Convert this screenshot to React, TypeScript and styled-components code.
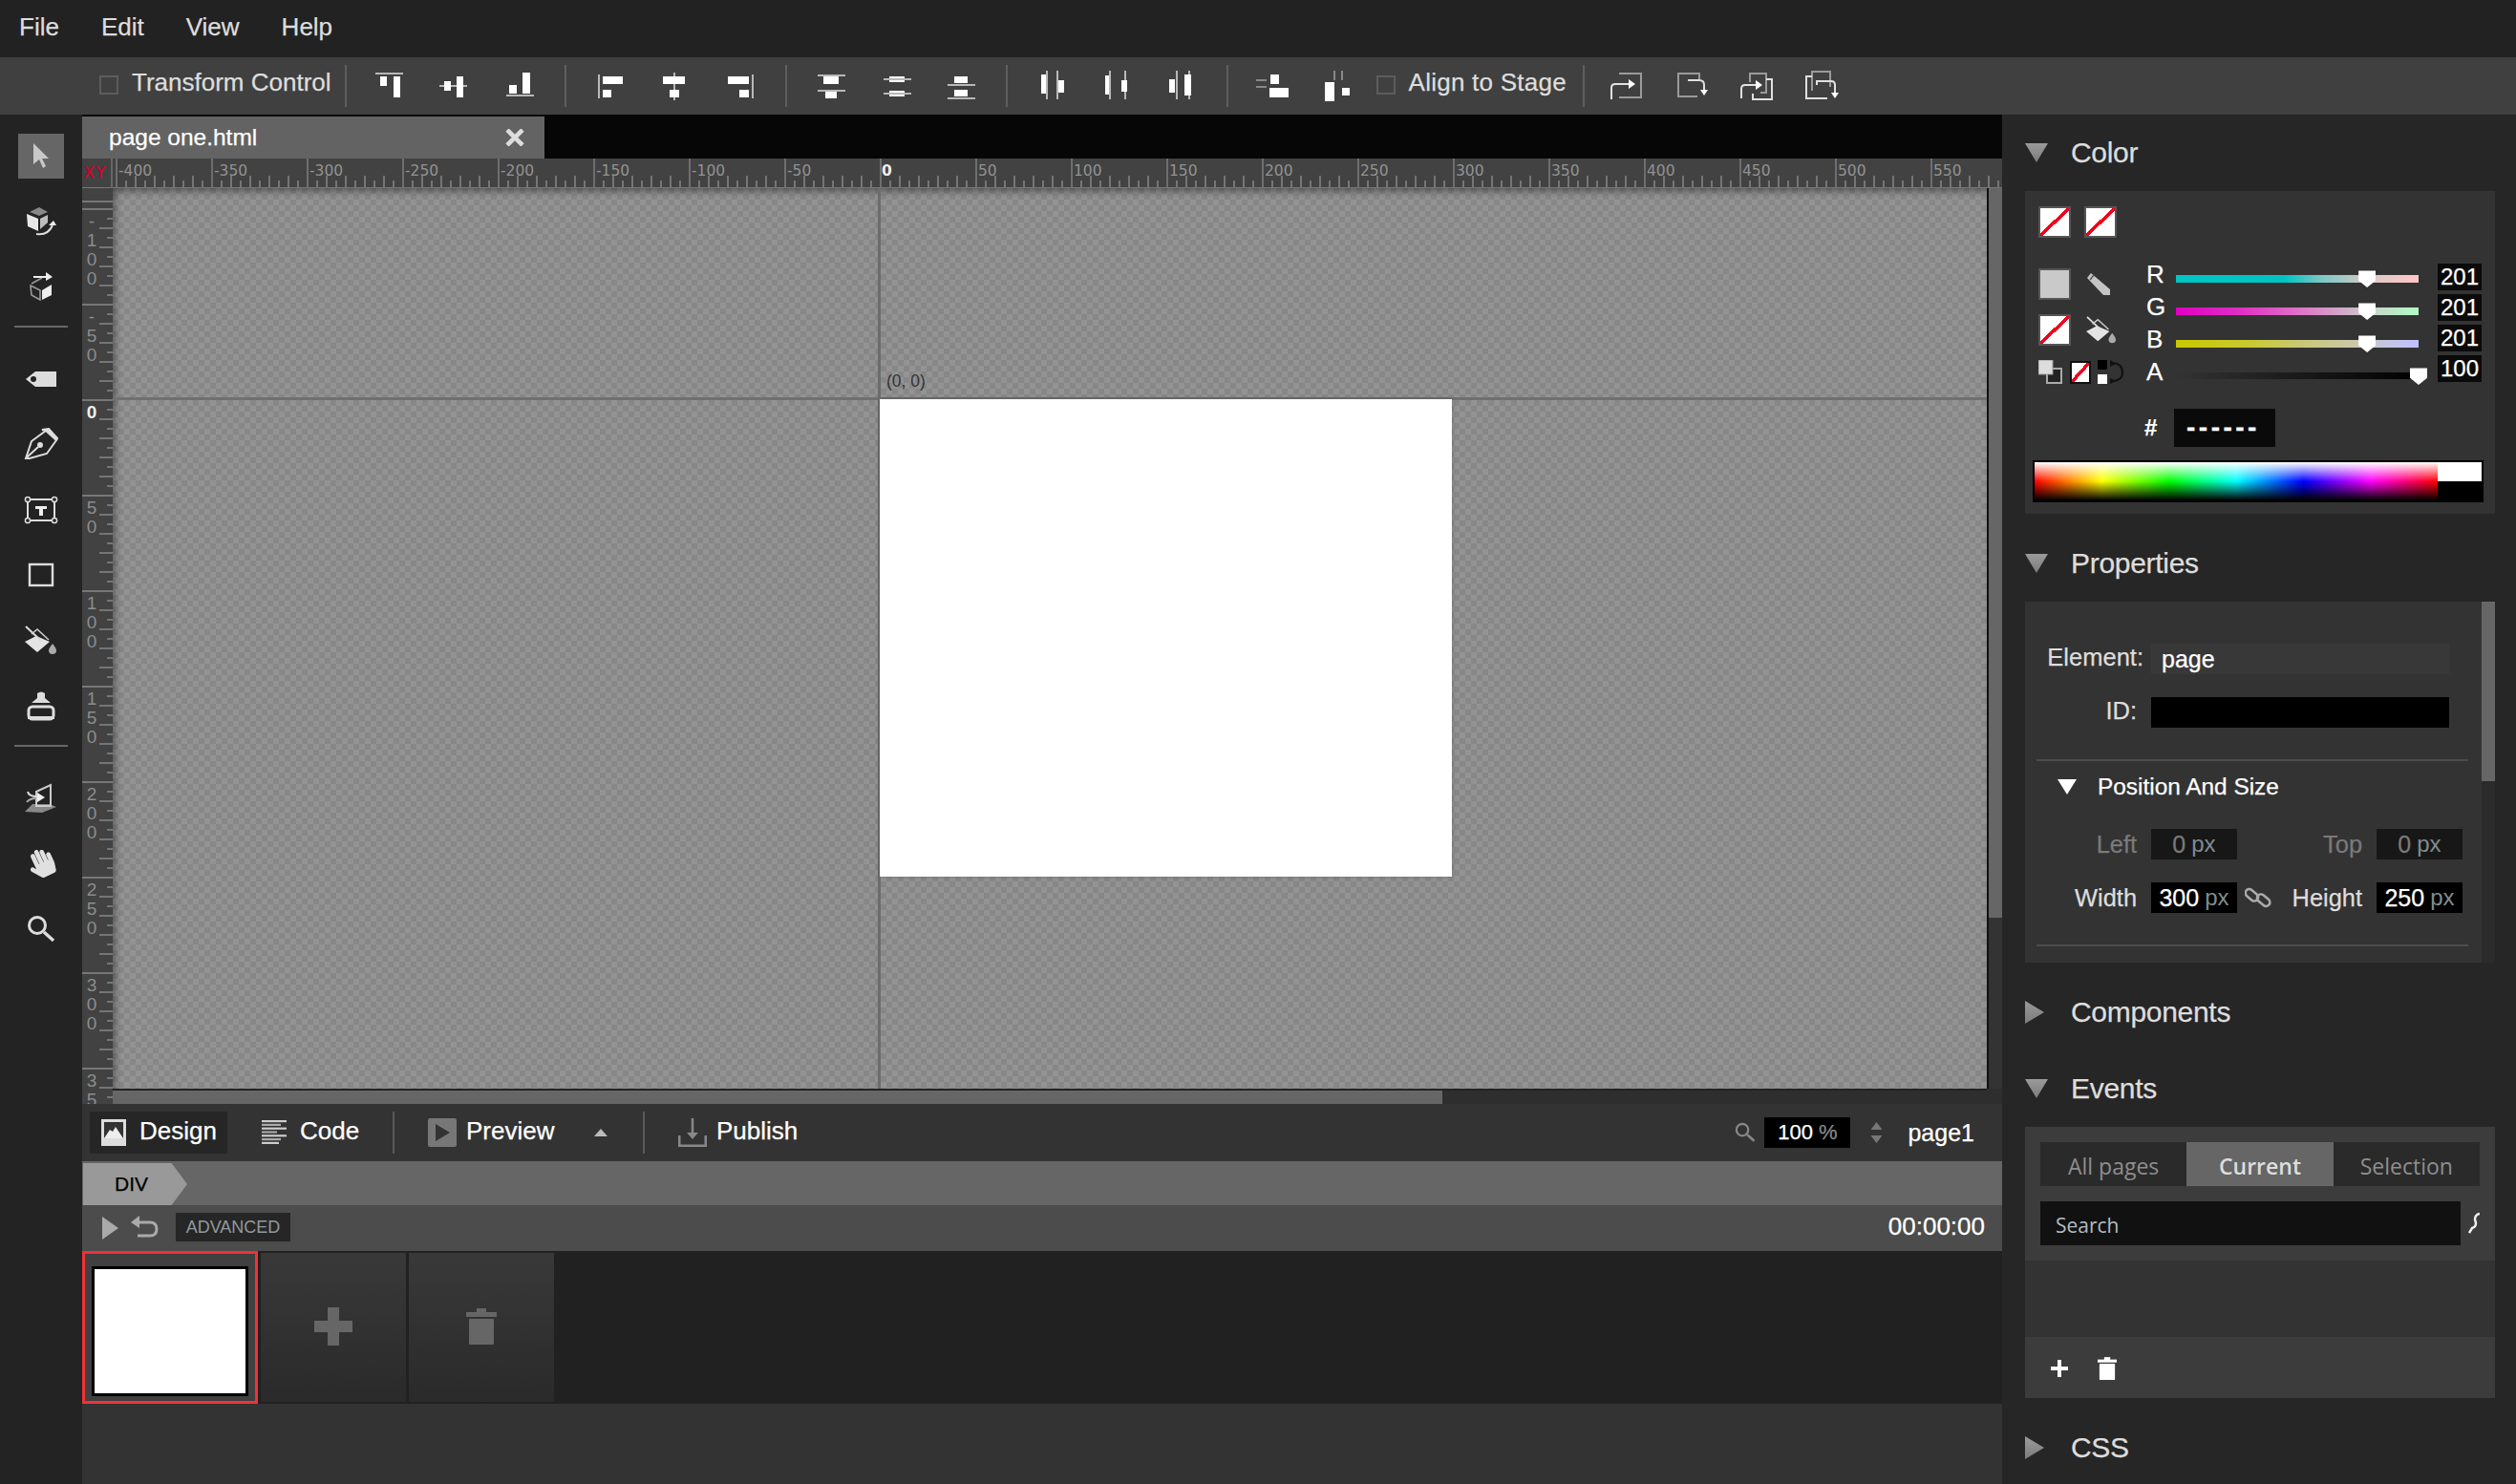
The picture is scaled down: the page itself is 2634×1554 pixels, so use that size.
import React from 'react';
import styled, { createGlobalStyle } from 'styled-components';
import { FaHandPaper } from 'react-icons/fa';

const GlobalStyle = createGlobalStyle`
  html, body {
    margin: 0;
    background: #262626;
    overflow: hidden;
  }
  * { box-sizing: border-box; }
`;

const MENU = ['File', 'Edit', 'View', 'Help'];

// rects for the align buttons: x, y, w, h, colour (white when left out)
type R = [number, number, number, number, string?];
const G = '#b8b8b8';
const ALIGN: R[][][] = [
  [
    [[4, 3, 29, 2, G], [9, 7, 7, 10], [23, 7, 7, 22]],
    [[3, 16, 29, 2, G], [8, 12, 7, 10], [21, 7, 7, 22]],
    [[5, 26, 29, 2, G], [8, 16, 8, 9], [22, 3, 8, 22]],
  ],
  [
    [[6, 5, 2, 25, G], [11, 7, 21, 8], [11, 21, 9, 8]],
    [[17, 3, 2, 29, G], [6, 7, 23, 8], [13, 21, 10, 8]],
    [[31, 5, 2, 25, G], [6, 7, 22, 8], [18, 21, 10, 8]],
  ],
  [
    [[5, 5, 29, 2, G], [11, 7, 16, 8], [5, 21, 29, 2, G], [13, 23, 12, 7]],
    [[12, 7, 16, 6], [6, 9, 29, 2, G], [12, 22, 16, 6], [6, 24, 29, 2, G]],
    [[12, 7, 14, 7], [5, 15, 29, 2, G], [12, 21, 14, 7], [5, 29, 29, 2, G]],
  ],
  [
    [[8, 5, 5, 20], [13, 1, 2, 30, G], [24, 1, 2, 30, G], [26, 11, 6, 13]],
    [[7, 6, 5, 20], [11, 1, 2, 30, G], [27, 1, 2, 30, G], [24, 11, 6, 12]],
    [[6, 10, 6, 14], [13, 1, 2, 30, G], [26, 1, 2, 30, G], [22, 5, 7, 22]],
  ],
  [
    [[2, 10, 11, 2, '#888'], [2, 17, 11, 2, '#888'], [17, 5, 9, 10], [16, 19, 20, 10]],
    [[6, 13, 10, 20], [15, 1, 2, 10, '#888'], [23, 1, 2, 10, '#888'], [24, 19, 8, 8]],
  ],
];

const TOP_VALUES = [-400, -350, -300, -250, -200, -150, -100, -50, 0, 50, 100, 150, 200, 250, 300, 350, 400, 450, 500, 550];
// the last one runs off the bottom of the ruler
const SIDE_VALUES = ['-100', '-50', '0', '50', '100', '150', '200', '250', '300', '35'];

const SLIDERS = [
  { name: 'R', at: 78.8, fill: 'linear-gradient(90deg,#00c6c6 0,#00c4c4 45%,#7cc8c4 60%,#c6c9c8 76%,#e6c8c8 84%,#ffc6c6 100%)' },
  { name: 'G', at: 78.8, fill: 'linear-gradient(90deg,#e000c4 0,#e02cc4 25%,#e070c8 50%,#c9c0c8 76%,#c4dcc8 84%,#b0fcc4 100%)' },
  { name: 'B', at: 78.8, fill: 'linear-gradient(90deg,#c9c800 0,#c9c830 30%,#c9c880 55%,#c9c9b0 76%,#c6c6dc 84%,#c0c0ff 100%)' },
  { name: 'A', at: 100, fill: 'linear-gradient(90deg,rgba(0,0,0,0) 0,#000 100%)' },
];
const VALUES = ['201', '201', '201', '100'];

const Glyph = ({ rects }: { rects: R[] }) => (
  <svg width="36" height="34" viewBox="0 0 36 34">
    {rects.map((r, i) => (
      <rect key={i} x={r[0]} y={r[1]} width={r[2]} height={r[3]} fill={r[4] || '#fff'} />
    ))}
  </svg>
);

const ArrangeFront = () => (
  <svg width="36" height="34" viewBox="0 0 36 34" fill="none">
    <path d="M10 4H33V29H10" stroke="#9a9a9a" strokeWidth="2" />
    <path d="M2 31V19Q2 15 6 15H21" stroke="#e0e0e0" strokeWidth="2" />
    <path d="M20 10L27 15L20 20Z" fill="#fff" />
  </svg>
);
const ArrangeBack = () => (
  <svg width="36" height="34" viewBox="0 0 36 34" fill="none">
    <path d="M26 10V4H4V28H24" stroke="#9a9a9a" strokeWidth="2" />
    <path d="M14 11H26Q31 11 31 16V22" stroke="#e0e0e0" strokeWidth="2" />
    <path d="M27 21H35L31 27Z" fill="#fff" />
  </svg>
);
const ArrangeForward = () => (
  <svg width="36" height="34" viewBox="0 0 36 34" fill="none">
    <path d="M11 13V4H28V24H22" stroke="#9a9a9a" strokeWidth="2" />
    <path d="M28 10H34V31H14V25" stroke="#e0e0e0" strokeWidth="2" />
    <path d="M2 30V20Q2 16 6 16H18" stroke="#e0e0e0" strokeWidth="2" />
    <path d="M17 11L24 16L17 21Z" fill="#fff" />
  </svg>
);
const ArrangeBackward = () => (
  <svg width="38" height="34" viewBox="0 0 38 34" fill="none">
    <path d="M8 22V2H27V18" stroke="#9a9a9a" strokeWidth="2" />
    <path d="M8 7H2V30H24" stroke="#e0e0e0" strokeWidth="2" />
    <path d="M13 16V12H28Q32 12 32 16V25" stroke="#e0e0e0" strokeWidth="2" />
    <path d="M28 24H36L32 30Z" fill="#fff" />
  </svg>
);

const ToolArrow = () => (
  <svg width="20" height="28" viewBox="0 0 20 28">
    <path d="M2 1V23L8 18L12 27L15 25L11 17H18Z" fill="#c8c8c8" />
  </svg>
);
const ToolRotate = () => (
  <svg width="34" height="32" viewBox="0 0 34 32">
    <path d="M5 6L15 1L24 6L15 10Z" fill="#888" />
    <path d="M2 8L14 13V26L3 21Z" fill="#e8e8e8" />
    <path d="M16 13L24 9V17L16 24Z" fill="#bdbdbd" />
    <path d="M12 29Q24 31 29 20" stroke="#ddd" strokeWidth="2" fill="none" />
    <path d="M25 20H33L30 15Z" fill="#eee" />
  </svg>
);
const ToolMove = () => (
  <svg width="26" height="30" viewBox="0 0 26 30">
    <path d="M2 14L12 19V29L3 24Z" fill="none" stroke="#999" strokeWidth="1.6" />
    <path d="M14 19L24 13V24L14 29Z" fill="#eee" />
    <path d="M3 12L14 6" stroke="#999" strokeWidth="1.6" />
    <path d="M5 5H20" stroke="#eee" strokeWidth="2" />
    <path d="M18 0L25 5L18 9Z" fill="#eee" />
  </svg>
);
const ToolTag = () => (
  <svg width="34" height="20" viewBox="0 0 34 20">
    <path d="M1 10L11 2H33V18H11Z" fill="#ddd" />
    <circle cx="9" cy="10" r="3" fill="#232323" />
  </svg>
);
const ToolPen = () => (
  <svg width="36" height="34" viewBox="0 0 36 34" fill="none" stroke="#ddd" strokeWidth="2">
    <path d="M2 32L8 14L23 3L34 13L24 27L6 32Z" />
    <path d="M23 3L19 2L26 1L35 11L34 13" fill="#ddd" />
    <path d="M3 31L15 20" />
    <circle cx="17" cy="18" r="2" fill="#ddd" />
  </svg>
);
const ToolText = () => (
  <svg width="36" height="30" viewBox="0 0 36 30">
    <rect x="4" y="4" width="28" height="22" fill="none" stroke="#ddd" strokeWidth="2" />
    {[[4, 4], [32, 4], [4, 26], [32, 26]].map(([x, y]) => (
      <circle key={x * y + x} cx={x} cy={y} r="2.6" fill="#232323" stroke="#ddd" strokeWidth="1.5" />
    ))}
    <rect x="12" y="11" width="12" height="3" fill="#eee" />
    <rect x="16" y="11" width="4" height="10" fill="#eee" />
  </svg>
);
const ToolRect = () => (
  <svg width="28" height="26" viewBox="0 0 28 26">
    <rect x="2" y="2" width="24" height="22" fill="none" stroke="#ddd" strokeWidth="2.4" />
  </svg>
);
const Bucket = ({ w = 34, h = 32 }: { w?: number; h?: number }) => (
  <svg width={w} height={h} viewBox="0 0 34 32">
    <path d="M0 17L12 11L26 17L13 28Z" fill="#e4e4e4" />
    <path d="M1 1L18 17" stroke="#ddd" strokeWidth="2" />
    <path d="M7 9L13 4L25 15" stroke="#ccc" strokeWidth="1.6" fill="none" />
    <path d="M29 19Q33 24 33 26A4 4 0 0 1 25 26Q25 24 29 19Z" fill="#aaa" />
  </svg>
);
const ToolStamp = () => (
  <svg width="30" height="32" viewBox="0 0 30 32">
    <path d="M11 3Q15 0 19 3V8L25 13H5L11 8Z" fill="#ddd" />
    <rect x="2" y="17" width="26" height="13" rx="4" fill="none" stroke="#ddd" strokeWidth="3" />
    <rect x="1" y="27" width="28" height="3" fill="#ddd" />
  </svg>
);
const ToolDeco = () => (
  <svg width="34" height="32" viewBox="0 0 34 32">
    <path d="M0 30L8 22H26L33 25L18 31Z" fill="#888" />
    <path d="M12 9L27 2V24L12 24Z" fill="none" stroke="#ccc" strokeWidth="2" />
    <path d="M3 9Q4 14 13 14" stroke="#ddd" strokeWidth="2" fill="none" />
    <path d="M2 20Q5 16 12 16" stroke="#aaa" strokeWidth="2" fill="none" />
    <path d="M13 10L21 15L13 20Z" fill="#eee" />
  </svg>
);
const Magnifier = ({ size = 30, color = '#ddd' }: { size?: number; color?: string }) => (
  <svg width={size} height={size} viewBox="0 0 30 30" fill="none" stroke={color}>
    <circle cx="11" cy="11" r="8.5" strokeWidth="3" />
    <path d="M18 18L28 27" strokeWidth="3.4" />
  </svg>
);

const DesignIcon = () => (
  <svg width="26" height="28" viewBox="0 0 26 28">
    <rect x="0" y="0" width="26" height="28" fill="#ddd" />
    <rect x="3" y="3" width="20" height="17" fill="#333" />
    <path d="M3 20L9 11L12 13L15 8L23 20Z" fill="#eee" />
  </svg>
);
const CodeIcon = () => (
  <svg width="26" height="26" viewBox="0 0 26 26">
    {[[0, 26], [0, 20], [0, 26], [0, 16], [0, 26], [0, 20], [0, 18]].map((l, i) => (
      <rect key={i} x="0" y={i * 3.8} width={l[1]} height="2.2" fill={i % 2 ? '#aaa' : '#ccc'} />
    ))}
  </svg>
);
const PreviewIcon = () => (
  <svg width="30" height="30" viewBox="0 0 30 30">
    <rect width="30" height="30" rx="2" fill="#777" />
    <path d="M8 6L23 15L8 24Z" fill="#333" />
  </svg>
);
const PublishIcon = () => (
  <svg width="30" height="30" viewBox="0 0 30 30">
    <path d="M1 18V29H29V18" stroke="#888" strokeWidth="3" fill="none" />
    <path d="M15 0V19" stroke="#888" strokeWidth="2.5" />
    <path d="M9 15H21L15 22Z" fill="#888" />
  </svg>
);
const UndoIcon = () => (
  <svg width="30" height="26" viewBox="0 0 30 26" fill="none">
    <path d="M8 7H21Q28 7 28 14Q28 21 21 21H8" stroke="#aaa" strokeWidth="3" />
    <path d="M10 0V13L1 7Z" fill="#aaa" />
  </svg>
);
const PlusIcon = ({ size, color, bar }: { size: number; color: string; bar: number }) => (
  <svg width={size} height={size} viewBox={`0 0 ${size} ${size}`}>
    <rect x={(size - bar) / 2} y="0" width={bar} height={size} fill={color} />
    <rect x="0" y={(size - bar) / 2} width={size} height={bar} fill={color} />
  </svg>
);
const TrashIcon = ({ w, h, color }: { w: number; h: number; color: string }) => (
  <svg width={w} height={h} viewBox="0 0 32 38">
    <rect x="0" y="4" width="32" height="5" fill={color} />
    <rect x="11" y="0" width="10" height="5" fill={color} />
    <rect x="3" y="11" width="26" height="27" rx="1" fill={color} />
  </svg>
);
const CloseIcon = () => (
  <svg width="20" height="18" viewBox="0 0 20 18" fill="none" stroke="#ddd" strokeWidth="4.6">
    <path d="M2 1L18 17M18 1L2 17" />
  </svg>
);
const LinkIcon = () => (
  <svg width="28" height="26" viewBox="0 0 28 26" fill="none" stroke="#aaa" strokeWidth="2.6">
    <rect x="0" y="6" width="15" height="8" rx="4" transform="rotate(40 7 10)" />
    <rect x="12" y="12" width="15" height="8" rx="4" transform="rotate(40 20 16)" />
  </svg>
);
const Pencil = () => (
  <svg width="26" height="26" viewBox="0 0 26 26">
    <path d="M5 1L25 18V24H18L1 6Z" fill="#c4c4c4" />
    <path d="M4 8L8 3" stroke="#555" strokeWidth="1.5" />
  </svg>
);
const MiniDefault = () => (
  <svg width="26" height="26" viewBox="0 0 26 26">
    <rect x="9" y="9" width="15" height="15" fill="#222" stroke="#aaa" strokeWidth="2" />
    <rect x="0" y="0" width="15" height="15" fill="#ddd" stroke="#999" />
  </svg>
);
const MiniSwap = () => (
  <svg width="28" height="26" viewBox="0 0 28 26" fill="none">
    <rect x="0" y="0" width="10" height="10" fill="#000" />
    <rect x="0" y="15" width="10" height="10" fill="#fff" />
    <path d="M14 3Q26 3 26 13Q26 22 14 22" stroke="#111" strokeWidth="2" />
    <path d="M13 0L19 4L13 7ZM13 19L19 22L13 25Z" fill="#111" />
  </svg>
);
const ClippedLink = () => (
  <svg width="12" height="24" viewBox="0 0 12 24" fill="none" stroke="#eee" strokeWidth="2.5">
    <path d="M12 2Q7 3 7 8L8 12Q8 16 4 17L1 22" />
  </svg>
);

const App: React.FC = () => {
  return (
    <Shell>
      <GlobalStyle />
      <MenuBar>
        {MENU.map((m) => (
          <MenuItem key={m}>{m}</MenuItem>
        ))}
      </MenuBar>

      <Toolbar>
        <CheckBox />
        <CheckLabel>Transform Control</CheckLabel>
        <ToolSep $first={14} />
        {ALIGN.slice(0, 4).map((group, g) => (
          <React.Fragment key={g}>
            <ToolGroup>
              {group.map((rects, i) => (
                <Glyph key={i} rects={rects} />
              ))}
            </ToolGroup>
            <ToolSep />
          </React.Fragment>
        ))}
        <ToolGroup>
          {ALIGN[4].map((rects, i) => (
            <Glyph key={i} rects={rects} />
          ))}
        </ToolGroup>
        <CheckBox $left={24} />
        <CheckLabel $track={0.25}>Align to Stage</CheckLabel>
        <ToolSep $first={17} />
        <ToolGroup>
          <ArrangeFront />
          <ArrangeBack />
          <ArrangeForward />
          <ArrangeBackward />
        </ToolGroup>
      </Toolbar>

      <Body>
        <LeftTools>
          <ToolSlot $active><ToolArrow /></ToolSlot>
          <ToolSlot><ToolRotate /></ToolSlot>
          <ToolSlot><ToolMove /></ToolSlot>
          <ToolDivider />
          <ToolSlot><ToolTag /></ToolSlot>
          <ToolSlot><ToolPen /></ToolSlot>
          <ToolSlot><ToolText /></ToolSlot>
          <ToolSlot><ToolRect /></ToolSlot>
          <ToolSlot><Bucket /></ToolSlot>
          <ToolSlot><ToolStamp /></ToolSlot>
          <ToolDivider />
          <ToolSlot><ToolDeco /></ToolSlot>
          <ToolSlot><HandIcon size={30} color="#e0e0e0" /></ToolSlot>
          <ToolSlot><Magnifier /></ToolSlot>
        </LeftTools>

        <Main>
          <TabStrip>
            <Tab>
              <TabTitle>page one.html</TabTitle>
              <CloseIcon />
            </Tab>
          </TabStrip>

          <Workspace>
            <Corner>XY</Corner>
            <TopRuler>
              {TOP_VALUES.map((v) => (
                <TopCell key={v}>
                  <TopLabel $zero={v === 0}>{v}</TopLabel>
                </TopCell>
              ))}
              <TopCell />
            </TopRuler>
            <SideRuler>
              {SIDE_VALUES.map((v) => (
                <SideCell key={v}>
                  {v.split('').map((c, i) => (
                    <SideDigit key={i} $zero={v === '0'}>{c}</SideDigit>
                  ))}
                </SideCell>
              ))}
            </SideRuler>
            <Canvas>
              <GuideV />
              <GuideH />
              <Origin>(0, 0)</Origin>
              <Stage />
            </Canvas>
            <VScroll>
              <VThumb />
            </VScroll>
            <HScroll>
              <HThumb />
            </HScroll>
            <ScrollCorner />
          </Workspace>

          <DesignBar>
            <ModeButton $active><DesignIcon /><span>Design</span></ModeButton>
            <ModeButton $w={150}><CodeIcon /><span>Code</span></ModeButton>
            <BarSep />
            <ModeButton $w={150} $gap={10}><PreviewIcon /><span>Preview</span></ModeButton>
            <UpCaret />
            <BarSep $wide />
            <ModeButton $w={140} $gap={10}><PublishIcon /><span>Publish</span></ModeButton>
            <BarRight>
              <Magnifier size={22} color="#888" />
              <ZoomInput>100 <Muted>%</Muted></ZoomInput>
              <Stepper>
                <StepUp />
                <StepDown />
              </Stepper>
              <PageName>page1</PageName>
            </BarRight>
          </DesignBar>

          <Crumbs>
            <Crumb>DIV</Crumb>
          </Crumbs>

          <TimeBar>
            <PlayCaret />
            <UndoIcon />
            <AdvancedChip>ADVANCED</AdvancedChip>
            <TimeCode>00:00:00</TimeCode>
          </TimeBar>

          <PageStrip>
            <PageThumb>
              <PagePaper />
            </PageThumb>
            <StripTile><PlusIcon size={40} color="#666" bar={12} /></StripTile>
            <StripTile><TrashIcon w={32} h={38} color="#666" /></StripTile>
          </PageStrip>

          <BottomFill />
        </Main>

        <RightPanel>
          <SectionHead>
            <Caret $open />
            <SectionTitle>Color</SectionTitle>
          </SectionHead>
          <ColorBox>
            <SwatchRow>
              <NoneSwatch />
              <NoneSwatch />
            </SwatchRow>
            <ColorMain>
              <ColorTools>
                <ToolPair>
                  <GraySwatch />
                  <Pencil />
                </ToolPair>
                <ToolPair>
                  <NoneSwatch />
                  <Bucket w={32} h={30} />
                </ToolPair>
                <MiniRow>
                  <MiniDefault />
                  <MiniNone />
                  <MiniSwap />
                </MiniRow>
              </ColorTools>
              <Sliders>
                {SLIDERS.map((c) => (
                  <SliderRow key={c.name}>
                    <ChannelName>{c.name}</ChannelName>
                    <Track $fill={c.fill} $thin={c.name === 'A'}>
                      <TrackThumb style={{ left: `${c.at}%` }} />
                    </Track>
                  </SliderRow>
                ))}
              </Sliders>
              <ValueColumn>
                {VALUES.map((v, i) => (
                  <ChannelValue key={i}>{v}</ChannelValue>
                ))}
              </ValueColumn>
            </ColorMain>
            <HexRow>
              <HexMark>#</HexMark>
              <HexInput>------</HexInput>
            </HexRow>
            <Spectrum>
              <SpectrumHue />
              <SpectrumMono />
            </Spectrum>
          </ColorBox>

          <SectionHead $gap>
            <Caret $open />
            <SectionTitle>Properties</SectionTitle>
          </SectionHead>
          <PropBox>
            <PropBody>
              <NameRow>
                <NameLabel>Element:</NameLabel>
                <NameInput>page</NameInput>
              </NameRow>
              <NameRow $id>
                <NameLabel $inset={7}>ID:</NameLabel>
                <NameInput $black />
              </NameRow>
              <PropLine />
              <PosHead>
                <PosCaret />
                <PosTitle>Position And Size</PosTitle>
              </PosHead>
              <FieldRow>
                <FieldLabel $dim $w={117}>Left</FieldLabel>
                <NumBox $dim>0 <Unit>px</Unit></NumBox>
                <FieldMiddle>
                  <FieldLabel $dim>Top</FieldLabel>
                </FieldMiddle>
                <NumBox $dim>0 <Unit>px</Unit></NumBox>
              </FieldRow>
              <FieldRow $second>
                <FieldLabel $w={117}>Width</FieldLabel>
                <NumBox>300 <Unit>px</Unit></NumBox>
                <FieldMiddle>
                  <LinkIcon />
                  <FieldLabel>Height</FieldLabel>
                </FieldMiddle>
                <NumBox>250 <Unit>px</Unit></NumBox>
              </FieldRow>
              <PropLine />
            </PropBody>
            <PropRail>
              <RailThumb />
            </PropRail>
          </PropBox>

          <SectionHead $gap>
            <Caret />
            <SectionTitle>Components</SectionTitle>
          </SectionHead>
          <SectionHead>
            <Caret $open />
            <SectionTitle>Events</SectionTitle>
          </SectionHead>
          <EventsBox>
            <EventsTop>
              <EventTabs>
                <EventTab>All pages</EventTab>
                <EventTab $active>Current</EventTab>
                <EventTab>Selection</EventTab>
              </EventTabs>
              <SearchRow>
                <SearchField>Search</SearchField>
                <ClippedLink />
              </SearchRow>
            </EventsTop>
            <EventsList />
            <EventsFoot>
              <PlusIcon size={18} color="#fff" bar={4} />
              <TrashIcon w={20} h={26} color="#fff" />
            </EventsFoot>
          </EventsBox>

          <SectionHead $gap>
            <Caret />
            <SectionTitle>CSS</SectionTitle>
          </SectionHead>
        </RightPanel>
      </Body>
    </Shell>
  );
};

export default App;

const Shell = styled.div`
  width: 2634px;
  height: 1554px;
  display: flex;
  flex-direction: column;
  overflow: hidden;
  font-family: 'Liberation Sans', Arial, sans-serif;
  -webkit-text-stroke: 0.25px;
  background: #262626;
  color: #ddd;
`;

const MenuBar = styled.div`
  height: 60px;
  flex: none;
  background: #222;
  display: flex;
  align-items: center;
  padding: 0 0 3px 20px;
  gap: 44px;
`;

const MenuItem = styled.div`
  font-size: 26px;
  color: #ddd;
`;

const Toolbar = styled.div`
  height: 60px;
  flex: none;
  background: #404040;
  display: flex;
  align-items: center;
  padding-left: 104px;
`;

const CheckBox = styled.div<{ $left?: number }>`
  width: 20px;
  height: 20px;
  margin-top: -3px;
  border: 2px solid #5c5c5c;
  margin-left: ${(p) => p.$left || 0}px;
  margin-right: 14px;
  flex: none;
`;

const CheckLabel = styled.div<{ $track?: number }>`
  font-size: 26px;
  color: #ddd;
  letter-spacing: ${(p) => p.$track || 0}px;
  white-space: nowrap;
  margin-top: -8px;
`;

const ToolSep = styled.div<{ $first?: number }>`
  width: 2px;
  height: 44px;
  background: #5e5e5e;
  flex: none;
  margin: ${(p) => (p.$first ? `0 26px 0 ${p.$first}px` : '0 27px 0 30px')};
`;

const ToolGroup = styled.div`
  display: flex;
  align-items: center;
  gap: 32px;
`;

const Body = styled.div`
  flex: 1;
  display: flex;
  min-height: 0;
`;

const LeftTools = styled.div`
  width: 86px;
  flex: none;
  background: #232323;
  padding-top: 9px;
  display: flex;
  flex-direction: column;
  align-items: center;
`;

const ToolSlot = styled.div<{ $active?: boolean }>`
  height: 68.5px;
  width: 48px;
  flex: none;
  display: flex;
  align-items: center;
  justify-content: center;
  background: ${(p) => (p.$active ? 'linear-gradient(#666,#666) center / 48px 47px no-repeat' : 'none')};
`;

const ToolDivider = styled.div`
  width: 56px;
  height: 2px;
  background: #666;
  margin: 6px 0 20px;
  flex: none;
`;

const HandIcon = styled(FaHandPaper)`
  transform: rotate(-25deg);
`;

const Main = styled.div`
  width: 2010px;
  flex: none;
  display: flex;
  flex-direction: column;
`;

const TabStrip = styled.div`
  height: 46px;
  flex: none;
  background: #060606;
  padding-top: 2px;
`;

const Tab = styled.div`
  width: 484px;
  height: 44px;
  background: #636363;
  display: flex;
  align-items: center;
  justify-content: space-between;
  padding: 0 21px 0 28px;
`;

const TabTitle = styled.div`
  font-size: 24.5px;
  color: #fff;
`;

const Workspace = styled.div`
  height: 990px;
  flex: none;
  display: grid;
  grid-template-columns: 32px 1962px 16px;
  grid-template-rows: 31px 943px 16px;
`;

const Corner = styled.div`
  background: #424242;
  color: #d4002c;
  font-family: 'DejaVu Sans', sans-serif;
  font-size: 16px;
  line-height: 18px;
  letter-spacing: 1.5px;
  padding: 6px 0 0 2px;
  border-right: 2px solid #666;
  border-bottom: 1px solid #777;
`;

const TopRuler = styled.div`
  grid-column: 2 / 4;
  display: flex;
  overflow: hidden;
  padding-left: 3px;
  background: #424242;
  border-bottom: 1px solid #777;
`;

const TopCell = styled.div`
  width: 100px;
  flex: none;
  border-left: 2px solid #6e6e6e;
  background:
    linear-gradient(90deg, #757575 2px, transparent 2px) 18px 100% / 20px 12px repeat-x,
    linear-gradient(90deg, #757575 2px, transparent 2px) 8px 100% / 20px 7px repeat-x;
`;

const TopLabel = styled.div<{ $zero?: boolean }>`
  font-family: 'DejaVu Sans', sans-serif;
  font-size: 15.5px;
  line-height: 18px;
  padding: 4px 0 0 ${(p) => (p.$zero ? '0' : '1px')};
  color: ${(p) => (p.$zero ? '#eee' : '#929292')};
  font-weight: ${(p) => (p.$zero ? 'bold' : 'normal')};
  -webkit-text-stroke: 0;
`;

const SideRuler = styled.div`
  grid-row: 2 / 4;
  overflow: hidden;
  padding-top: 21px;
  background:
    linear-gradient(#777, #777) 0 13px / 32px 2px no-repeat,
    #424242;
`;

const SideCell = styled.div`
  height: 100px;
  border-top: 2px solid #777;
  display: flex;
  flex-direction: column;
  padding: 2px 0 0 4px;
  background:
    linear-gradient(#757575 2px, transparent 2px) 100% 18px / 14px 20px repeat-y,
    linear-gradient(#757575 2px, transparent 2px) 100% 8px / 6px 20px repeat-y;
`;

const SideDigit = styled.div<{ $zero?: boolean }>`
  font-size: 19px;
  line-height: 20px;
  width: 12px;
  text-align: center;
  color: ${(p) => (p.$zero ? '#eee' : '#8c8c8c')};
  font-weight: ${(p) => (p.$zero ? 'bold' : 'normal')};
  -webkit-text-stroke: 0;
`;

const Canvas = styled.div`
  position: relative;
  overflow: hidden;
  background-color: #8e8e8e;
  background-image: conic-gradient(#878787 25%, #939393 0 50%, #878787 0 75%, #939393 0);
  background-size: 12px 12px;
  box-shadow: inset 0 9px 7px -5px rgba(0, 0, 0, 0.35), inset 8px 0 7px -5px rgba(0, 0, 0, 0.35);
`;

const GuideV = styled.div`
  position: absolute;
  left: 801px;
  top: 0;
  bottom: 0;
  width: 3px;
  background: #6c6c6c;
`;

const GuideH = styled.div`
  position: absolute;
  left: 0;
  right: 0;
  top: 219px;
  height: 3px;
  background: #707070;
`;

const Origin = styled.div`
  position: absolute;
  left: 810px;
  top: 192px;
  font-size: 17.5px;
  line-height: 20px;
  color: #333;
  -webkit-text-stroke: 0;
`;

const Stage = styled.div`
  position: absolute;
  left: 803px;
  top: 221px;
  width: 599px;
  height: 500px;
  background: #fff;
  box-shadow: 0 0 4px rgba(0, 0, 0, 0.25);
`;

const VScroll = styled.div`
  background: #333;
  border-left: 2px solid #111;
`;

const VThumb = styled.div`
  height: 764px;
  background: #666;
`;

const HScroll = styled.div`
  background: #2e2e2e;
  border-top: 2px solid #222;
`;

const HThumb = styled.div`
  width: 1392px;
  height: 14px;
  background: #666;
`;

const ScrollCorner = styled.div`
  background: #2e2e2e;
`;

const DesignBar = styled.div`
  height: 60px;
  flex: none;
  background: #333;
  display: flex;
  align-items: center;
  padding-left: 8px;
`;

const ModeButton = styled.div<{ $active?: boolean; $w?: number; $gap?: number }>`
  width: ${(p) => p.$w || 144}px;
  height: 44px;
  flex: none;
  display: flex;
  align-items: center;
  gap: ${(p) => p.$gap || 14}px;
  padding-left: 12px;
  font-size: 26px;
  color: #fff;
  background: ${(p) => (p.$active ? '#262626' : 'none')};
  margin-right: ${(p) => (p.$active ? '24px' : '0')};
  span {
    margin-top: -3px;
  }
`;

const BarSep = styled.div<{ $wide?: boolean }>`
  width: 2px;
  height: 44px;
  flex: none;
  background: #5a5a5a;
  margin: ${(p) => (p.$wide ? '0 23px 0 37px' : '0 23px 0 -1px')};
`;

const UpCaret = styled.div`
  width: 14px;
  height: 8px;
  flex: none;
  margin-left: 36px;
  background: #bbb;
  clip-path: polygon(50% 0, 100% 100%, 0 100%);
`;

const BarRight = styled.div`
  margin-left: auto;
  display: flex;
  align-items: center;
  padding-right: 29px;
`;

const ZoomInput = styled.div`
  width: 90px;
  height: 32px;
  margin-left: 9px;
  background: #000;
  color: #fff;
  font-size: 22px;
  display: flex;
  align-items: center;
  justify-content: center;
  gap: 6px;
`;

const Muted = styled.span`
  color: #8a8a8a;
`;

const Stepper = styled.div`
  display: flex;
  flex-direction: column;
  gap: 6px;
  margin: 0 27px 0 21px;
`;

const StepUp = styled.div`
  width: 12px;
  height: 8px;
  background: #777;
  clip-path: polygon(50% 0, 100% 100%, 0 100%);
`;

const StepDown = styled(StepUp)`
  clip-path: polygon(0 0, 100% 0, 50% 100%);
`;

const PageName = styled.div`
  font-size: 25px;
  color: #fff;
`;

const Crumbs = styled.div`
  height: 46px;
  flex: none;
  background: #666;
  padding: 2px 0 0 1px;
`;

const Crumb = styled.div`
  width: 109px;
  height: 44px;
  background: #999;
  clip-path: polygon(0 0, 85% 0, 100% 50%, 85% 100%, 0 100%);
  color: #000;
  font-size: 21px;
  display: flex;
  align-items: center;
  padding-left: 33px;
`;

const TimeBar = styled.div`
  height: 48px;
  flex: none;
  background: #4c4c4c;
  display: flex;
  align-items: center;
  padding: 0 18px 0 21px;
`;

const PlayCaret = styled.div`
  width: 17px;
  height: 24px;
  margin-right: 12px;
  background: #aaa;
  clip-path: polygon(0 0, 100% 50%, 0 100%);
`;

const AdvancedChip = styled.div`
  width: 120px;
  height: 30px;
  margin: -2px 0 0 18px;
  background: #262626;
  color: #929a9e;
  font-size: 18px;
  -webkit-text-stroke: 0;
  display: flex;
  align-items: center;
  justify-content: center;
`;

const TimeCode = styled.div`
  margin: -3px 0 0 auto;
  font-size: 26px;
  color: #fff;
`;

const PageStrip = styled.div`
  height: 160px;
  flex: none;
  background: #212121;
  display: flex;
`;

const PageThumb = styled.div`
  width: 184px;
  height: 160px;
  flex: none;
  border: 3px solid #f03238;
  background: #404040;
  padding: 13px 7px 5px;
`;

const PagePaper = styled.div`
  width: 164px;
  height: 136px;
  background: #fff;
  border: 3px solid #000;
`;

const StripTile = styled.div`
  width: 152px;
  height: 156px;
  margin: 2px 0 2px 3px;
  flex: none;
  background: linear-gradient(#393939, #2a2a2a);
  display: flex;
  align-items: center;
  justify-content: center;
  padding-bottom: 2px;
`;

const BottomFill = styled.div`
  flex: 1;
  background: #333;
`;

const RightPanel = styled.div`
  flex: 1;
  padding: 0 22px 0 24px;
  background: #262626;
`;

const SectionHead = styled.div<{ $gap?: boolean }>`
  height: 80px;
  margin-top: ${(p) => (p.$gap ? '12px' : '0')};
  display: flex;
  align-items: center;
`;

const Caret = styled.div<{ $open?: boolean }>`
  width: ${(p) => (p.$open ? '24px' : '20px')};
  height: ${(p) => (p.$open ? '20px' : '24px')};
  margin-right: ${(p) => (p.$open ? '24px' : '28px')};
  background: linear-gradient(#9a9a9a, #7c7c7c);
  clip-path: ${(p) =>
    p.$open ? 'polygon(0 0, 100% 0, 50% 100%)' : 'polygon(0 0, 100% 50%, 0 100%)'};
`;

const SectionTitle = styled.div`
  font-size: 30px;
  color: #ddd;
  letter-spacing: -0.3px;
`;

const ColorBox = styled.div`
  height: 338px;
  background: #333;
  padding-top: 16px;
`;

const NoneSwatch = styled.div`
  width: 34px;
  height: 33px;
  flex: none;
  border: 2px solid #555;
  background: linear-gradient(
    to bottom right,
    #fff calc(50% - 1.8px),
    #f0001c calc(50% - 1.8px),
    #f0001c calc(50% + 1.8px),
    #fff calc(50% + 1.8px)
  );
`;

const GraySwatch = styled.div`
  width: 34px;
  height: 33px;
  flex: none;
  border: 2px solid #555;
  background: #c9c9c9;
`;

const SwatchRow = styled.div`
  display: flex;
  gap: 14px;
  padding-left: 14px;
`;

const ColorMain = styled.div`
  display: flex;
  height: 124px;
  margin-top: 27px;
  padding-left: 14px;
`;

const ColorTools = styled.div`
  width: 113px;
  flex: none;
  padding-top: 5px;
  display: flex;
  flex-direction: column;
  gap: 15px;
`;

const ToolPair = styled.div`
  display: flex;
  align-items: center;
  gap: 16px;
`;

const MiniRow = styled.div`
  display: flex;
  align-items: center;
  gap: 7px;
`;

const MiniNone = styled(NoneSwatch)`
  width: 22px;
  height: 24px;
  border-color: #111;
`;

const Sliders = styled.div`
  display: flex;
  flex-direction: column;
  margin: -1px 20px 0 0;
`;

const SliderRow = styled.div`
  display: flex;
  height: 34px;
  flex: none;
`;

const ChannelName = styled.div`
  width: 31px;
  font-size: 26px;
  line-height: 24px;
  color: #fff;
`;

const Track = styled.div<{ $fill: string; $thin?: boolean }>`
  position: relative;
  width: 254px;
  height: ${(p) => (p.$thin ? '7px' : '8px')};
  margin-top: 13px;
  background: ${(p) => p.$fill};
`;

const TrackThumb = styled.div`
  position: absolute;
  top: -6px;
  width: 18px;
  height: 19px;
  margin-left: -9px;
  background: #fff;
  clip-path: polygon(0 8%, 100% 8%, 100% 62%, 50% 100%, 0 62%);
`;

const ValueColumn = styled.div`
  display: flex;
  flex-direction: column;
  gap: 4px;
`;

const ChannelValue = styled.div`
  width: 46px;
  height: 28px;
  flex: none;
  background: #0a0a0a;
  color: #fff;
  font-size: 24px;
  display: flex;
  align-items: center;
  justify-content: center;
`;

const HexRow = styled.div`
  display: flex;
  align-items: center;
  margin-top: 28px;
  padding-left: 125px;
`;

const HexMark = styled.div`
  width: 31px;
  font-size: 24px;
  font-weight: bold;
  color: #fff;
`;

const HexInput = styled.div`
  width: 106px;
  height: 40px;
  background: #0a0a0a;
  color: #fff;
  font-size: 28px;
  font-weight: bold;
  letter-spacing: 3.5px;
  display: flex;
  align-items: center;
  padding-left: 13px;
`;

const Spectrum = styled.div`
  width: 472px;
  height: 44px;
  margin: 14px 0 0 8px;
  background: #000;
  border: 2px solid #000;
  display: flex;
`;

const SpectrumHue = styled.div`
  width: 422px;
  background:
    linear-gradient(180deg, #fff 0, rgba(255, 255, 255, 0) 50%, rgba(0, 0, 0, 0) 50%, #000 100%),
    linear-gradient(90deg, #f00, #ff0, #0f0, #0ff, #00f, #f0f, #f00);
`;

const SpectrumMono = styled.div`
  width: 46px;
  height: 20px;
  background: #fff;
`;

const PropBox = styled.div`
  height: 378px;
  background: #333;
  display: flex;
`;

const PropBody = styled.div`
  flex: 1;
  padding-top: 44px;
`;

const NameRow = styled.div<{ $id?: boolean }>`
  display: flex;
  align-items: center;
  margin-top: ${(p) => (p.$id ? '24px' : '0')};
`;

const NameLabel = styled.div<{ $inset?: number }>`
  width: 124px;
  margin: -3px 8px 0 0;
  padding-right: ${(p) => p.$inset || 0}px;
  text-align: right;
  font-size: 25.5px;
  color: #ddd;
`;

const NameInput = styled.div<{ $black?: boolean }>`
  width: 312px;
  height: 32px;
  padding-left: 11px;
  background: ${(p) => (p.$black ? '#000' : '#383838')};
  color: #fff;
  font-size: 25px;
  display: flex;
  align-items: center;
`;

const PropLine = styled.div`
  width: 452px;
  height: 2px;
  margin: 33px 0 0 12px;
  background: #4c4c4c;
`;

const PosHead = styled.div`
  display: flex;
  align-items: center;
  height: 32px;
  margin-top: 11px;
  padding-left: 34px;
`;

const PosCaret = styled.div`
  width: 20px;
  height: 16px;
  margin-right: 22px;
  background: #fff;
  clip-path: polygon(0 0, 100% 0, 50% 100%);
`;

const PosTitle = styled.div`
  font-size: 24.4px;
  color: #fff;
`;

const FieldRow = styled.div<{ $second?: boolean }>`
  display: flex;
  align-items: center;
  height: 32px;
  margin-top: ${(p) => (p.$second ? '24px' : '28px')};
`;

const FieldLabel = styled.div<{ $dim?: boolean; $w?: number }>`
  width: ${(p) => (p.$w ? `${p.$w}px` : 'auto')};
  flex: none;
  text-align: right;
  font-size: 25.4px;
  color: ${(p) => (p.$dim ? '#7a7a7a' : '#ddd')};
`;

const NumBox = styled.div<{ $dim?: boolean }>`
  width: 90px;
  height: 32px;
  flex: none;
  margin-left: 15px;
  background: ${(p) => (p.$dim ? '#171717' : '#000')};
  color: ${(p) => (p.$dim ? '#7a7a7a' : '#fff')};
  font-size: 25px;
  display: flex;
  align-items: center;
  justify-content: center;
  gap: 6px;
`;

const Unit = styled.span`
  color: #7f8c90;
  font-size: 24px;
  -webkit-text-stroke: 0;
`;

const FieldMiddle = styled.div`
  width: 131px;
  flex: none;
  display: flex;
  align-items: center;
  justify-content: space-between;
  padding-left: 8px;
  & > div:only-child {
    margin-left: auto;
  }
`;

const PropRail = styled.div`
  width: 14px;
  flex: none;
  background: #2b2b2b;
`;

const RailThumb = styled.div`
  height: 188px;
  background: #666;
`;

const EventsBox = styled.div`
  height: 284px;
  display: flex;
  flex-direction: column;
`;

const EventsTop = styled.div`
  height: 140px;
  flex: none;
  background: #3c3c3c;
  padding: 16px 16px 0;
`;

const EventTabs = styled.div`
  display: flex;
  height: 46px;
`;

const EventTab = styled.div<{ $active?: boolean }>`
  flex: 1;
  display: flex;
  align-items: center;
  justify-content: center;
  font-family: 'Open Sans', sans-serif;
  font-size: 23px;
  padding-top: 4px;
  -webkit-text-stroke: 0;
  background: ${(p) => (p.$active ? '#666' : '#2a2a2a')};
  color: ${(p) => (p.$active ? '#ddd' : '#8e8e8e')};
  font-weight: ${(p) => (p.$active ? 600 : 400)};
`;

const SearchRow = styled.div`
  display: flex;
  align-items: center;
  gap: 8px;
  margin-top: 16px;
  margin-right: -4px;
`;

const SearchField = styled.div`
  width: 440px;
  height: 46px;
  background: #111;
  color: #b4bcc0;
  font-family: 'Open Sans', sans-serif;
  font-size: 21px;
  -webkit-text-stroke: 0;
  display: flex;
  align-items: center;
  padding: 4px 0 0 16px;
`;

const EventsList = styled.div`
  height: 80px;
  flex: none;
  background: #333;
`;

const EventsFoot = styled.div`
  height: 64px;
  flex: none;
  background: #3c3c3c;
  display: flex;
  align-items: center;
  gap: 31px;
  padding: 2px 0 0 27px;
`;
